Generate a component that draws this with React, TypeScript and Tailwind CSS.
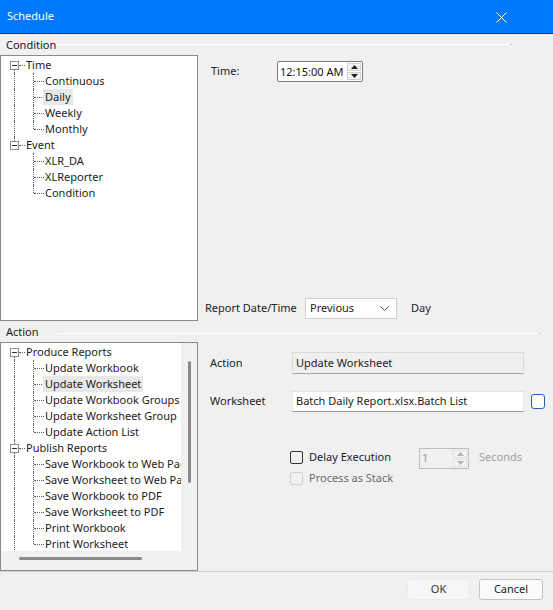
import React from 'react';

type Line = 'none' | 'top' | 'bottom' | 'full';

type Node = {
  label: string;
  root?: boolean;
  rootLine: Line;
  childLine?: Line;
  selected?: boolean;
};

const conditionTree: Node[] = [
  { label: 'Time', root: true, rootLine: 'bottom' },
  { label: 'Continuous', rootLine: 'full', childLine: 'full' },
  { label: 'Daily', rootLine: 'full', childLine: 'full', selected: true },
  { label: 'Weekly', rootLine: 'full', childLine: 'full' },
  { label: 'Monthly', rootLine: 'full', childLine: 'top' },
  { label: 'Event', root: true, rootLine: 'top' },
  { label: 'XLR_DA', rootLine: 'none', childLine: 'full' },
  { label: 'XLReporter', rootLine: 'none', childLine: 'full' },
  { label: 'Condition', rootLine: 'none', childLine: 'top' },
];

const actionTree: Node[] = [
  { label: 'Produce Reports', root: true, rootLine: 'bottom' },
  { label: 'Update Workbook', rootLine: 'full', childLine: 'full' },
  { label: 'Update Worksheet', rootLine: 'full', childLine: 'full', selected: true },
  { label: 'Update Workbook Groups', rootLine: 'full', childLine: 'full' },
  { label: 'Update Worksheet Group', rootLine: 'full', childLine: 'full' },
  { label: 'Update Action List', rootLine: 'full', childLine: 'top' },
  { label: 'Publish Reports', root: true, rootLine: 'full' },
  { label: 'Save Workbook to Web Page', rootLine: 'full', childLine: 'full' },
  { label: 'Save Worksheet to Web Page', rootLine: 'full', childLine: 'full' },
  { label: 'Save Workbook to PDF', rootLine: 'full', childLine: 'full' },
  { label: 'Save Worksheet to PDF', rootLine: 'full', childLine: 'full' },
  { label: 'Print Workbook', rootLine: 'full', childLine: 'full' },
  { label: 'Print Worksheet', rootLine: 'full', childLine: 'top' },
];

function vLine(line: Line, x: 'root' | 'child') {
  if (line === 'none') return null;
  const left = x === 'root' ? 'left-[13px]' : 'left-[32px]';
  const span =
    line === 'top' ? 'top-0 h-[8px]' : line === 'bottom' ? 'top-[8px] bottom-0' : 'top-0 bottom-0';
  return <span className={`absolute ${left} ${span} w-0 border-l border-dotted border-[#5a5a5a]`} />;
}

function TreeRow({ node }: { node: Node }) {
  return (
    <div className="relative h-4 whitespace-nowrap">
      {vLine(node.rootLine, 'root')}
      {node.root ? (
        <>
          <span className="absolute left-[18px] top-[8px] w-[6px] border-t border-dotted border-[#5a5a5a]" />
          <span className="absolute left-[9px] top-[4px] flex h-[9px] w-[9px] items-center justify-center border border-[#8e8e8e] bg-white">
            <span className="h-px w-[5px] bg-[#2b2b2b]" />
          </span>
          <span className="absolute left-[25px] top-0 leading-4">{node.label}</span>
        </>
      ) : (
        <>
          {vLine(node.childLine ?? 'none', 'child')}
          <span className="absolute left-[33px] top-[8px] w-[10px] border-t border-dotted border-[#5a5a5a]" />
          <span
            className={`absolute left-[42px] top-0 h-4 px-[2px] leading-4 ${node.selected ? 'bg-[#e8e8e8]' : ''}`}
          >
            {node.label}
          </span>
        </>
      )}
    </div>
  );
}

function SpinArrows({ disabled }: { disabled?: boolean }) {
  const fill = disabled ? '#b4b4b4' : '#1f1f1f';
  const btn = disabled
    ? 'flex flex-1 items-center justify-center border border-[#e2e2e2] bg-[#f4f4f4]'
    : 'flex flex-1 items-center justify-center border border-[#d0d0d0] bg-[#f2f2f2]';
  return (
    <div className="flex h-full w-[15px] shrink-0 flex-col gap-px py-px pr-px">
      <div className={btn}>
        <svg width="7" height="4" viewBox="0 0 7 4">
          <path d="M3.5 0 L7 4 L0 4 Z" fill={fill} />
        </svg>
      </div>
      <div className={btn}>
        <svg width="7" height="4" viewBox="0 0 7 4">
          <path d="M0 0 L7 0 L3.5 4 Z" fill={fill} />
        </svg>
      </div>
    </div>
  );
}

function SectionHeader({ label, lineClass }: { label: string; lineClass: string }) {
  return (
    <div className="flex h-[21px] items-center pl-[6px]">
      <span className="leading-4 text-[#1a1a1a]">{label}</span>
      <span className={`flex items-center ${lineClass}`}>
        <span className="h-px flex-1 bg-white" />
        <span className="h-px w-px bg-[#a0a0a0]" />
      </span>
    </div>
  );
}

export default function App() {
  return (
    <div
      className="flex h-[610px] w-[553px] flex-col overflow-hidden bg-[#f0f0f0] text-[11px] text-[#1c1c1c]"
      style={{ fontFamily: '"Noto Sans", "Open Sans", sans-serif' }}
    >
      {/* title bar */}
      <div className="flex h-[34px] shrink-0 items-center justify-between border-b border-[#1c3350] bg-[#0079fd] pl-[7px] pr-[46px]">
        <span className="text-[11px] text-white">Schedule</span>
        <svg width="11" height="11" viewBox="0 0 11 11" className="mt-px">
          <path d="M0.5 0.5 L10.5 10.5 M10.5 0.5 L0.5 10.5" stroke="#fff" strokeWidth="1" />
        </svg>
      </div>

      <SectionHeader label="Condition" lineClass="ml-0 mr-[42px] flex-1" />

      {/* condition body */}
      <div className="flex h-[266px] shrink-0">
        <div className="h-full w-[198px] shrink-0 border border-[#8a8a8a] bg-white pt-px">
          {conditionTree.map((n) => (
            <TreeRow key={n.label} node={n} />
          ))}
        </div>
        <div className="flex flex-1 flex-col justify-between pb-[2px] pt-[6px]">
          <div className="flex items-start pl-[13px]">
            <span className="mt-[2px] w-[66px] leading-[15px] text-[#222]">Time:</span>
            <div className="flex h-[21px] w-[86px] items-center justify-between whitespace-nowrap rounded-[2px] border border-[#7a7a7a] bg-white pl-[2px] text-[11px] text-[#111]">
              <span className="leading-4">12:15:00 AM</span>
              <SpinArrows />
            </div>
          </div>
          <div className="flex items-center pl-[7px]">
            <span className="w-[100px] text-[#222]">Report Date/Time</span>
            <div className="flex h-[21px] w-[92px] items-center justify-between border border-[#d0d0d0] bg-white pl-[4px] pr-[7px]">
              <span>Previous</span>
              <svg width="9" height="5" viewBox="0 0 9 5">
                <path d="M0.5 0.5 L4.5 4.5 L8.5 0.5" fill="none" stroke="#555" strokeWidth="1" />
              </svg>
            </div>
            <span className="ml-[14px] text-[#222]">Day</span>
          </div>
        </div>
      </div>

      <SectionHeader label="Action" lineClass="ml-[18px] mr-[13px] flex-1 pt-[3px]" />

      {/* action body */}
      <div className="flex h-[229px] shrink-0">
        <div className="flex h-full w-[198px] shrink-0 flex-col border border-[#8a8a8a]">
          <div className="flex h-[208px]">
            <div className="w-[180px] overflow-hidden bg-white pt-px">
              {actionTree.map((n) => (
                <TreeRow key={n.label} node={n} />
              ))}
            </div>
            <div className="flex flex-1 justify-center bg-[#f0f0f0]">
              <div className="mt-[18px] h-[122px] w-[3px] rounded-full bg-[#8a8a8a]" />
            </div>
          </div>
          <div className="flex-1 bg-[#f0f0f0] pl-[18px] pt-[6px]">
            <div className="h-[3px] w-[123px] rounded-full bg-[#8a8a8a]" />
          </div>
        </div>

        <div className="flex flex-1 flex-col pt-[10px]">
          <div className="flex h-[22px] items-center pl-[12px]">
            <span className="w-[82px] text-[#222]">Action</span>
            <div className="flex h-[22px] w-[232px] items-center border border-[#dadada] border-b-[#a8a8a8] bg-[#efefef] pl-[3px]">
              Update Worksheet
            </div>
          </div>
          <div className="mt-[17px] flex h-[21px] items-center pl-[12px]">
            <span className="w-[82px] text-[#222]">Worksheet</span>
            <div className="flex h-[21px] w-[232px] items-center border border-[#e3e3e3] border-b-[#9a9a9a] bg-white pl-[3px]">
              Batch Daily Report.xlsx.Batch List
            </div>
            <span className="ml-[7px] h-[15px] w-[14px] rounded-[3px] border-[1.5px] border-[#1f5fc0] bg-white" />
          </div>

          <div className="mt-[36px] flex h-[21px] items-center pl-[92px]">
            <div className="flex w-[129px] items-center">
              <span className="mb-[3px] h-[13px] w-[13px] rounded-[2px] border border-[#333] bg-[#f0f0f0]" />
              <span className="mb-[3px] ml-[6px] text-[#1a1a3a]">Delay Execution</span>
            </div>
            <div className="flex h-[21px] w-[50px] items-center justify-between border border-[#bdbdbd] pl-[2px] text-[#9a9a9a]">
              <span>1</span>
              <SpinArrows disabled />
            </div>
            <span className="mb-[3px] ml-[10px] text-[#a0a0a0]">Seconds</span>
          </div>
          <div className="mt-px flex h-4 items-center pl-[92px]">
            <span className="h-[13px] w-[13px] rounded-[2px] border border-[#cfcfcf] bg-[#f0f0f0]" />
            <span className="ml-[6px] text-[#6a6a6a]">Process as Stack</span>
          </div>
        </div>
      </div>

      {/* footer */}
      <div className="flex flex-1 items-start justify-end gap-[9px] border-t border-[#cfcfcf] pr-[10px] pt-[7px]">
        <button className="h-[21px] w-[63px] rounded-[3px] border border-[#ebebeb] bg-[#f6f6f6] text-[11px] text-[#333]">
          OK
        </button>
        <button className="h-[21px] w-[64px] rounded-[3px] border border-[#c2c2c2] bg-[#fbfbfb] text-[11px] text-[#222]">
          Cancel
        </button>
      </div>
    </div>
  );
}
